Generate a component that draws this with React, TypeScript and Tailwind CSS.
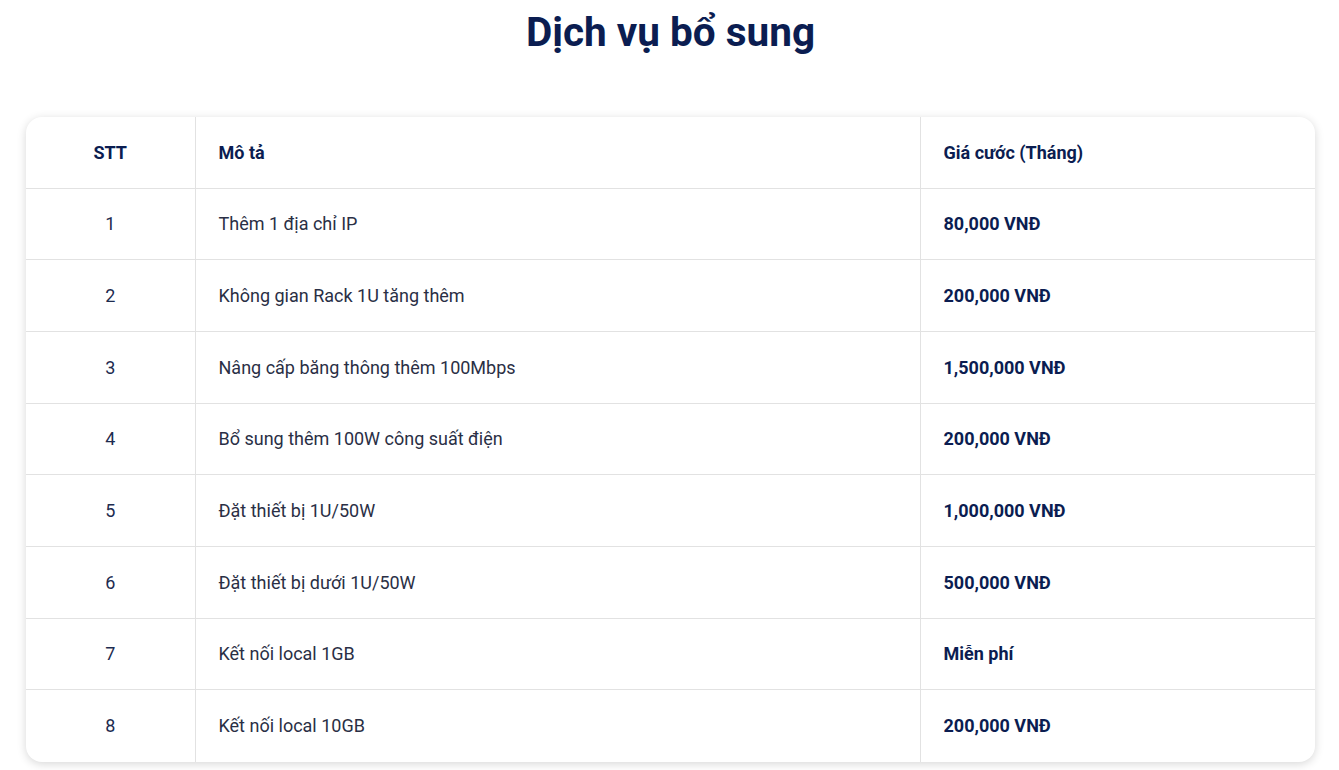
import React from 'react';

interface ServiceRow {
  id: number;
  description: string;
  price: string;
}

const rows: ServiceRow[] = [
  { id: 1, description: 'Thêm 1 địa chỉ IP', price: '80,000 VNĐ' },
  { id: 2, description: 'Không gian Rack 1U tăng thêm', price: '200,000 VNĐ' },
  { id: 3, description: 'Nâng cấp băng thông thêm 100Mbps', price: '1,500,000 VNĐ' },
  { id: 4, description: 'Bổ sung thêm 100W công suất điện', price: '200,000 VNĐ' },
  { id: 5, description: 'Đặt thiết bị 1U/50W', price: '1,000,000 VNĐ' },
  { id: 6, description: 'Đặt thiết bị dưới 1U/50W', price: '500,000 VNĐ' },
  { id: 7, description: 'Kết nối local 1GB', price: 'Miễn phí' },
  { id: 8, description: 'Kết nối local 10GB', price: '200,000 VNĐ' },
];

const App: React.FC = () => {
  return (
    <div className="min-h-screen bg-white pl-[26px] pr-[24px] pt-[6px] pb-2 font-['Roboto',sans-serif]">
      <h1 className="text-center text-[40.5px] leading-[52px] font-bold text-[#0b1d51]">Dịch vụ bổ sung</h1>

      <div className="mt-[59px] rounded-2xl bg-white shadow-[0_2px_10px_rgba(0,0,0,0.16)] overflow-hidden">
        <table className="w-full border-collapse text-[18px]">
          <thead>
            <tr className="h-[71px] border-b border-[#e2e2e2]">
              <th className="w-[169px] text-center font-bold text-[#0b1d51]">STT</th>
              <th className="w-[725px] border-l border-[#e2e2e2] pl-[23px] text-left font-bold text-[#0b1d51]">Mô tả</th>
              <th className="border-l border-[#e2e2e2] pl-[23px] text-left font-bold text-[#0b1d51]">Giá cước (Tháng)</th>
            </tr>
          </thead>
          <tbody>
            {rows.map((row, index) => (
              <tr
                key={row.id}
                className={`h-[71.7px] ${index < rows.length - 1 ? 'border-b border-[#e2e2e2]' : ''}`}
              >
                <td className="text-center text-[#1d2b4f]">{row.id}</td>
                <td className="border-l border-[#e2e2e2] pl-[23px] text-[#2a2f45]">{row.description}</td>
                <td className="border-l border-[#e2e2e2] pl-[23px] font-bold text-[#0b1d51]">{row.price}</td>
              </tr>
            ))}
          </tbody>
        </table>
      </div>
    </div>
  );
};

export default App;
